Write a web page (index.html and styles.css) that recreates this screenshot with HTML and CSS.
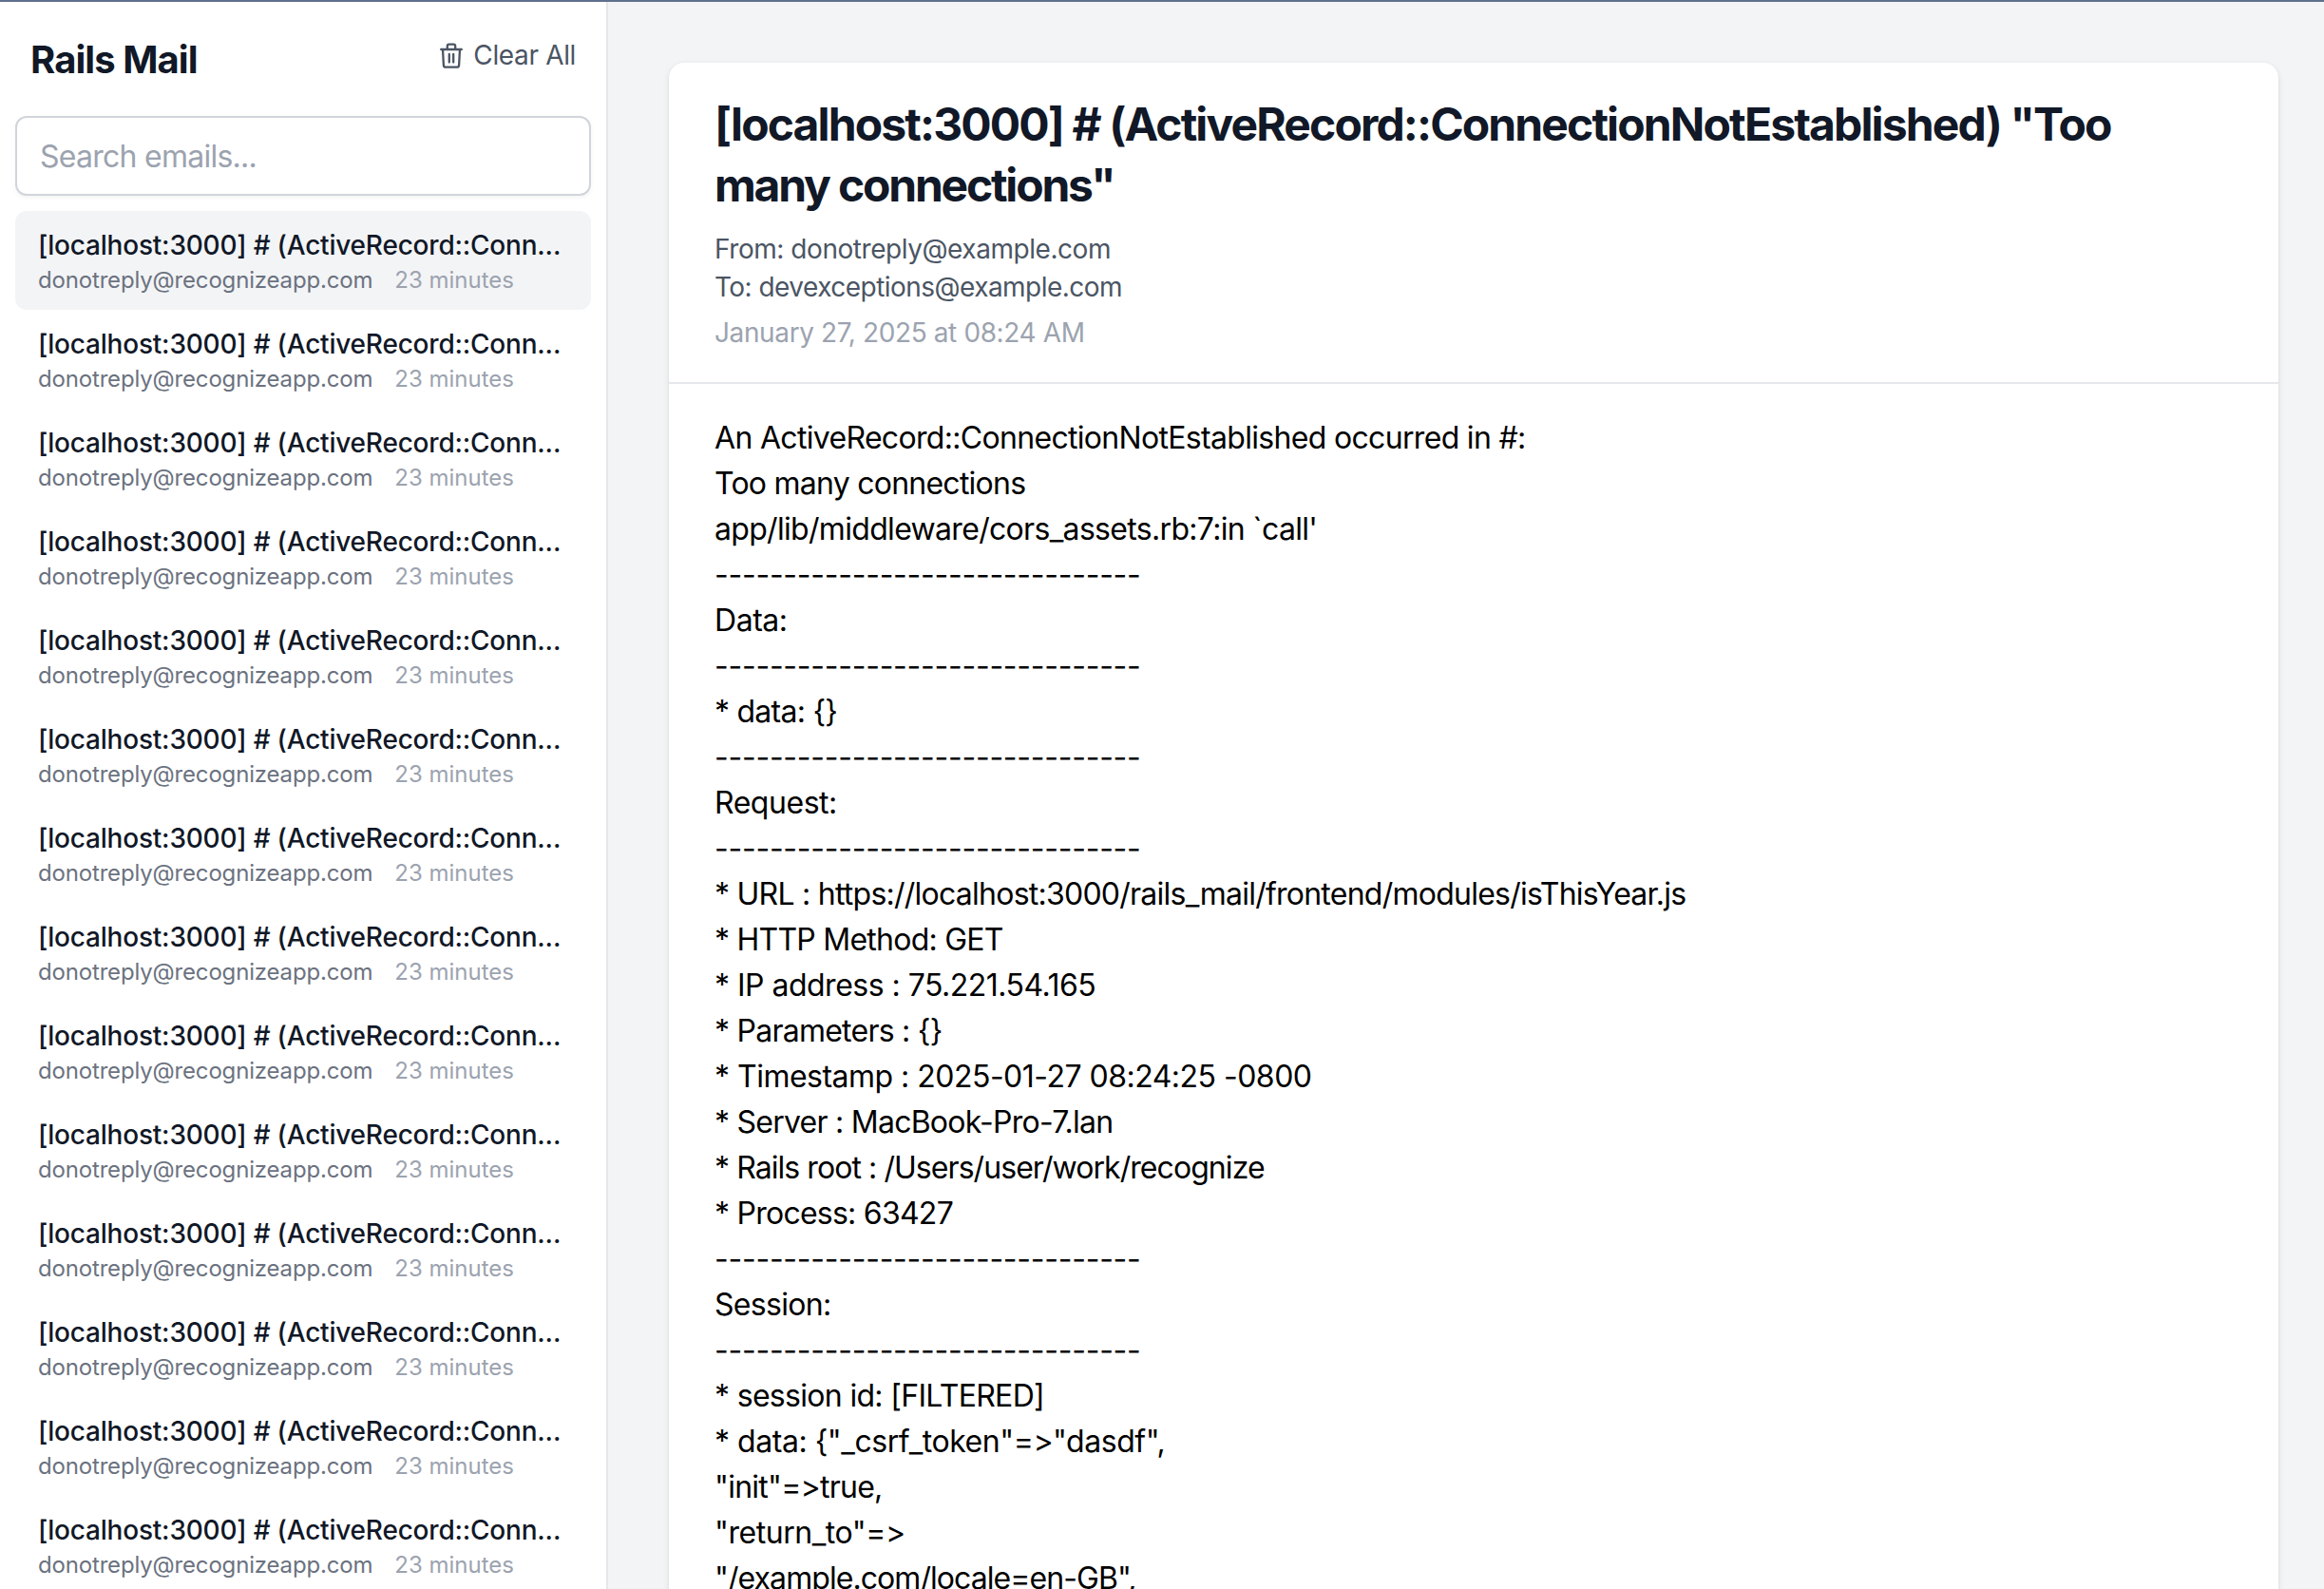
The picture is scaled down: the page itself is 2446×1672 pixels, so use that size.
FILE: index.html
```html
<!DOCTYPE html>
<html lang="en">
<head>
<meta charset="utf-8">
<title>Rails Mail</title>
<link rel="stylesheet" href="styles.css">
</head>
<body>
<div class="app">
  <aside class="sidebar">
    <header class="sidebar-header">
      <h1 class="brand">Rails Mail</h1>
      <button class="clear-all" type="button">
        <svg class="trash" viewBox="0 0 24 27" fill="none" stroke="currentColor" stroke-width="2.3" stroke-linecap="round" stroke-linejoin="round">
          <path d="M1.2 7h21.6M7.8 6.5V3.4a1.8 1.8 0 0 1 1.8-1.8h4.8a1.8 1.8 0 0 1 1.8 1.8v3.1M3 7l.9 16.6a2.1 2.1 0 0 0 2.1 2h12a2.1 2.1 0 0 0 2.1-2L21 7M9.8 12v8.5M14.2 12v8.5"/>
        </svg>
        <span>Clear All</span>
      </button>
    </header>
    <div class="search"><input class="search-input" type="text" placeholder="Search emails..."></div>
    <ul class="mail-list">
      <li class="mail active"><div class="subject">[localhost:3000] # (ActiveRecord::Conn...</div><div class="meta"><span class="sender">donotreply@recognizeapp.com</span><span class="age">23 minutes</span></div></li>
      <li class="mail"><div class="subject">[localhost:3000] # (ActiveRecord::Conn...</div><div class="meta"><span class="sender">donotreply@recognizeapp.com</span><span class="age">23 minutes</span></div></li>
      <li class="mail"><div class="subject">[localhost:3000] # (ActiveRecord::Conn...</div><div class="meta"><span class="sender">donotreply@recognizeapp.com</span><span class="age">23 minutes</span></div></li>
      <li class="mail"><div class="subject">[localhost:3000] # (ActiveRecord::Conn...</div><div class="meta"><span class="sender">donotreply@recognizeapp.com</span><span class="age">23 minutes</span></div></li>
      <li class="mail"><div class="subject">[localhost:3000] # (ActiveRecord::Conn...</div><div class="meta"><span class="sender">donotreply@recognizeapp.com</span><span class="age">23 minutes</span></div></li>
      <li class="mail"><div class="subject">[localhost:3000] # (ActiveRecord::Conn...</div><div class="meta"><span class="sender">donotreply@recognizeapp.com</span><span class="age">23 minutes</span></div></li>
      <li class="mail"><div class="subject">[localhost:3000] # (ActiveRecord::Conn...</div><div class="meta"><span class="sender">donotreply@recognizeapp.com</span><span class="age">23 minutes</span></div></li>
      <li class="mail"><div class="subject">[localhost:3000] # (ActiveRecord::Conn...</div><div class="meta"><span class="sender">donotreply@recognizeapp.com</span><span class="age">23 minutes</span></div></li>
      <li class="mail"><div class="subject">[localhost:3000] # (ActiveRecord::Conn...</div><div class="meta"><span class="sender">donotreply@recognizeapp.com</span><span class="age">23 minutes</span></div></li>
      <li class="mail"><div class="subject">[localhost:3000] # (ActiveRecord::Conn...</div><div class="meta"><span class="sender">donotreply@recognizeapp.com</span><span class="age">23 minutes</span></div></li>
      <li class="mail"><div class="subject">[localhost:3000] # (ActiveRecord::Conn...</div><div class="meta"><span class="sender">donotreply@recognizeapp.com</span><span class="age">23 minutes</span></div></li>
      <li class="mail"><div class="subject">[localhost:3000] # (ActiveRecord::Conn...</div><div class="meta"><span class="sender">donotreply@recognizeapp.com</span><span class="age">23 minutes</span></div></li>
      <li class="mail"><div class="subject">[localhost:3000] # (ActiveRecord::Conn...</div><div class="meta"><span class="sender">donotreply@recognizeapp.com</span><span class="age">23 minutes</span></div></li>
      <li class="mail"><div class="subject">[localhost:3000] # (ActiveRecord::Conn...</div><div class="meta"><span class="sender">donotreply@recognizeapp.com</span><span class="age">23 minutes</span></div></li>
    </ul>
  </aside>
  <main class="content">
    <article class="card">
      <header class="card-header">
        <h2 class="title">[localhost:3000] # (ActiveRecord::ConnectionNotEstablished) "Too<br><span class="title-end">many connections"</span></h2>
        <p class="from">From: donotreply@example.com</p>
        <p class="to">To: devexceptions@example.com</p>
        <p class="date">January 27, 2025 at 08:24 AM</p>
      </header>
      <div class="body">
        <p>An ActiveRecord::ConnectionNotEstablished occurred in #:</p>
        <p class="snug">Too many connections</p>
        <p>app/lib/middleware/cors_assets.rb:7:in `call'</p>
        <p class="rule">-------------------------------</p>
        <p class="loose">Data:</p>
        <p class="rule">-------------------------------</p>
        <p class="snug">* data: {}</p>
        <p class="rule">-------------------------------</p>
        <p class="loose">Request:</p>
        <p class="rule">-------------------------------</p>
        <p class="snug">* URL : https://localhost:3000/rails_mail/frontend/modules/isThisYear.js</p>
        <p class="snug">* HTTP Method: GET</p>
        <p class="digits">* IP address : 75.221.54.165</p>
        <p class="snug">* Parameters : {}</p>
        <p class="digits">* Timestamp : 2025-01-27 08:24:25 -0800</p>
        <p class="snug">* Server : MacBook-Pro-7.lan</p>
        <p class="tight">* Rails root : /Users/user/work/recognize</p>
        <p class="snug">* Process: 63427</p>
        <p class="rule">-------------------------------</p>
        <p>Session:</p>
        <p class="rule">-------------------------------</p>
        <p>* session id: [FILTERED]</p>
        <p class="hash">* data: {"_csrf_token"=&gt;"dasdf",</p>
        <p class="hash snug">"init"=&gt;true,</p>
        <p class="hash">"return_to"=&gt;</p>
        <p class="tight">"/example.com/locale=en-GB",</p>
      </div>
    </article>
  </main>
</div>
</body>
</html>
```
FILE: styles.css
```css
* { box-sizing: border-box; margin: 0; padding: 0; }

body {
  height: 1672px;
  overflow: hidden;
  font-family: Inter, "Liberation Sans", sans-serif;
  font-size: 32px;
  line-height: 48px;
  color: #000;
  background: #f3f4f6;
}

.app {
  display: flex;
  height: 1672px;
  overflow: hidden;
  border-top: 2px solid #5f708f;
}

.sidebar {
  flex: none;
  width: 640px;
  background: #fff;
  border-right: 2px solid #e5e7eb;
}

.sidebar-header {
  display: flex;
  justify-content: space-between;
  align-items: flex-start;
  height: 120px;
  padding: 32px 32px 0;
}

.brand {
  padding-top: 1px;
  font-size: 40px;
  line-height: 56px;
  font-weight: 700;
  letter-spacing: -0.0235em;
  color: #111827;
}

.clear-all {
  display: flex;
  align-items: center;
  gap: 11px;
  padding-top: 4px;
  border: 0;
  background: none;
  font: inherit;
  font-size: 28px;
  line-height: 40px;
  letter-spacing: -0.0125em;
  color: #4b5563;
}

.trash { width: 24px; height: 27px; }

.search { padding: 0 16px; }

.search-input {
  display: block;
  width: 100%;
  height: 84px;
  padding: 0 24px;
  border: 2px solid #d1d5db;
  border-radius: 12px;
  box-shadow: 0 2px 4px rgba(0, 0, 0, .05);
  font: inherit;
  letter-spacing: -0.0232em;
}

.search-input::placeholder { color: #9ca3af; opacity: 1; }

.mail-list { padding: 16px 16px 0; list-style: none; }

.mail { padding: 16px 24px; border-radius: 12px; }
.mail.active { background: #f3f4f6; }

.subject {
  font-size: 28px;
  line-height: 40px;
  font-weight: 500;
  letter-spacing: -0.0075em;
  white-space: nowrap;
  color: #111827;
}

.meta {
  display: flex;
  gap: 23px;
  height: 32px;
  padding-top: 1px;
  font-size: 24px;
  line-height: 32px;
  white-space: nowrap;
}

.sender { letter-spacing: -0.0071em; color: #6b7280; }
.age { letter-spacing: 0; color: #9ca3af; }

.content { flex: 1; padding: 64px 48px 0 64px; }

.card {
  min-height: 1700px;
  background: #fff;
  border-radius: 16px;
  box-shadow: 0 2px 6px rgba(0, 0, 0, .1), 0 2px 4px -2px rgba(0, 0, 0, .1);
}

.card-header {
  padding: 33px 48px 32px;
  border-bottom: 2px solid #e5e7eb;
  font-size: 28px;
  line-height: 40px;
  color: #4b5563;
}

.title {
  margin-bottom: 15px;
  font-size: 48px;
  line-height: 64px;
  font-weight: 650;
  letter-spacing: -0.0391em;
  white-space: nowrap;
  color: #111827;
}

.title-end { letter-spacing: -0.046em; }
.from { letter-spacing: -0.016em; }
.to { letter-spacing: -0.0191em; }
.date { margin-top: 8px; letter-spacing: -0.0135em; color: #9ca3af; }

.body { padding: 33px 48px 32px; letter-spacing: -0.0213em; white-space: nowrap; }
.hash { letter-spacing: -0.0145em; font-feature-settings: "calt" 0; }
.snug { letter-spacing: -0.0235em; }
.tight { letter-spacing: -0.0292em; }
.digits { letter-spacing: -0.016em; }
.loose { letter-spacing: -0.0145em; }
.rule { letter-spacing: -0.0078em; }
```
